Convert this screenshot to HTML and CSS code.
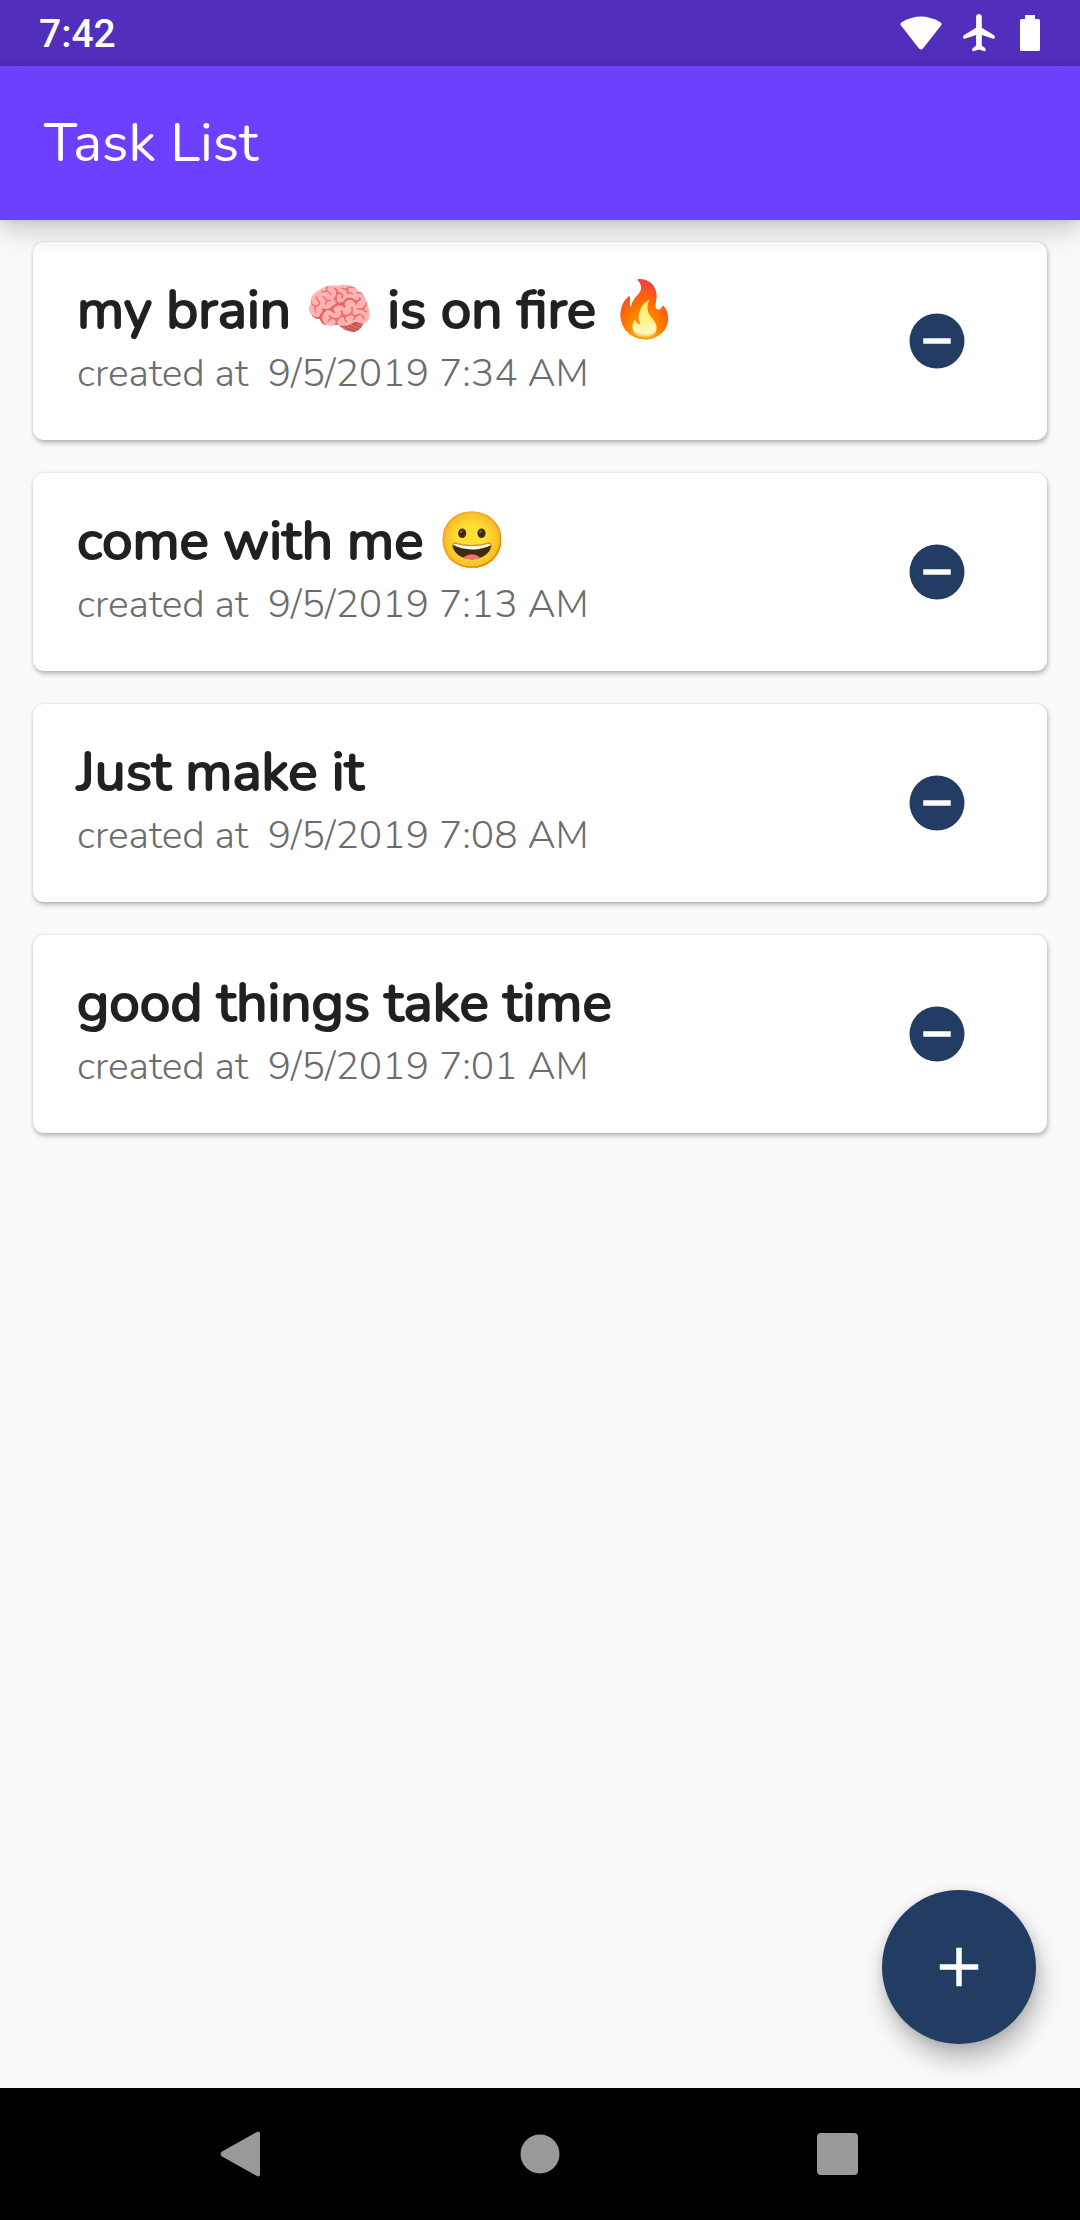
FILE: index.html
```
<!DOCTYPE html>
<html lang="en">
<head>
<meta charset="utf-8">
<meta name="viewport" content="width=device-width, initial-scale=1">
<title>Task List</title>
<link rel="stylesheet" href="styles.css">
</head>
<body>
<div class="screen">
  <div class="status-bar">
    <span class="clock">7:42</span>
    <div class="status-icons">
      <svg class="wifi" viewBox="0 0 42 34" aria-label="Wi-Fi"><path d="M2 6Q21-5 40 6Q42.500 7.500 41 9.500L23 32.500Q21 34.500 19 32.500L1 9.500Q-.5 7.500 2 6Z"/></svg>
      <svg class="plane" viewBox="2.500 2 18 20" aria-label="Airplane mode"><path d="M20.400 14.300c0-.5-.25-.95-.65-1.200L13.500 9.200V3.500C13.500 2.700 12.800 2 12 2s-1.500.7-1.500 1.500v5.700l-6.250 3.900c-.4.250-.65.7-.65 1.200 0 .47.450.8.900.67l6-1.870v5.600l-1.700 1.200c-.2.150-.3.350-.3.600v.6c0 .33.300.55.600.45L12 20.700l2.900.85c.3.100.6-.12.6-.45v-.6c0-.25-.1-.45-.3-.6l-1.700-1.200v-5.600l6 1.870c.45.130.9-.2.9-.67z"/></svg>
      <svg class="battery" viewBox="0 0 20 36" aria-label="Battery full"><path d="M5 0h10v4h3.500q1.500 0 1.500 1.500v29q0 1.500-1.500 1.500h-17Q0 36 0 34.500v-29Q0 4 1.500 4H5z"/></svg>
    </div>
  </div>
  <header class="app-bar"><h1>Task List</h1></header>
  <main class="content">
    <ul class="tasks">
      <li class="task">
        <div class="task-text"><h2>my brain 🧠 is on fire 🔥</h2><p>created at&nbsp; 9/5/2019 7:34 AM</p></div>
        <button class="remove" aria-label="Remove task"><svg viewBox="0 0 24 24"><path d="M12 2a10 10 0 1 0 0 20 10 10 0 0 0 0-20zm5 11H7v-2h10z"/></svg></button>
      </li>
      <li class="task">
        <div class="task-text"><h2>come with me 😀</h2><p>created at&nbsp; 9/5/2019 7:13 AM</p></div>
        <button class="remove" aria-label="Remove task"><svg viewBox="0 0 24 24"><path d="M12 2a10 10 0 1 0 0 20 10 10 0 0 0 0-20zm5 11H7v-2h10z"/></svg></button>
      </li>
      <li class="task">
        <div class="task-text"><h2>Just make it</h2><p>created at&nbsp; 9/5/2019 7:08 AM</p></div>
        <button class="remove" aria-label="Remove task"><svg viewBox="0 0 24 24"><path d="M12 2a10 10 0 1 0 0 20 10 10 0 0 0 0-20zm5 11H7v-2h10z"/></svg></button>
      </li>
      <li class="task">
        <div class="task-text"><h2>good things take time</h2><p>created at&nbsp; 9/5/2019 7:01 AM</p></div>
        <button class="remove" aria-label="Remove task"><svg viewBox="0 0 24 24"><path d="M12 2a10 10 0 1 0 0 20 10 10 0 0 0 0-20zm5 11H7v-2h10z"/></svg></button>
      </li>
    </ul>
    <button class="fab" aria-label="Add task"><svg viewBox="0 0 24 24"><path d="M19 13h-6v6h-2v-6H5v-2h6V5h2v6h6z"/></svg></button>
  </main>
  <nav class="nav-bar" aria-label="System navigation">
    <button aria-label="Back"><svg viewBox="0 0 46 46"><path d="M37 1.500Q41-1 41 3v40q0 4-4 1.500L3 25.500Q0 23 3 20.500Z"/></svg></button>
    <button aria-label="Home"><svg viewBox="0 0 46 46"><circle cx="23" cy="23" r="19.500"/></svg></button>
    <button aria-label="Overview"><svg viewBox="0 0 46 46"><rect x="2" y="2" width="41" height="42" rx="4"/></svg></button>
  </nav>
</div>
</body>
</html>
```
FILE: styles.css
```
* {
  box-sizing: border-box;
}

body {
  margin: 0;
  background: #fafafa;
  color: #212121;
  font-family: Nunito, Lato, "Noto Sans", sans-serif;
}

h1,
h2,
p,
ul {
  margin: 0;
  padding: 0;
}

button {
  border: 0;
  padding: 0;
  background: none;
  color: inherit;
  cursor: pointer;
}

svg {
  display: block;
  fill: currentColor;
}

.screen {
  display: flex;
  flex-direction: column;
  min-height: 100vh;
}

.status-bar {
  display: flex;
  align-items: center;
  justify-content: space-between;
  height: 66px;
  padding: 0 40px 0 39px;
  background: #522ebd;
  color: #fff;
}

.clock {
  padding-top: 2px;
  font-family: Roboto, sans-serif;
  font-size: 39px;
  font-weight: 500;
}

.status-icons {
  display: flex;
  align-items: center;
}

.wifi {
  width: 42px;
  height: 34px;
  margin-right: 18px;
}

.plane {
  width: 36px;
  height: 38px;
  margin-right: 24px;
}

.battery {
  width: 20px;
  height: 36px;
}

.app-bar {
  position: relative;
  z-index: 1;
  display: flex;
  align-items: center;
  height: 154px;
  padding: 0 44px 2px;
  background: #6d3fff;
  color: #fff;
  box-shadow: 0 10px 26px rgba(0, 0, 0, 0.2), 0 1px 8px rgba(0, 0, 0, 0.08);
}

h1 {
  font-size: 55px;
  font-weight: 400;
}

.content {
  position: relative;
  flex: 1;
  padding: 22px 33px;
}

.tasks {
  display: grid;
  gap: 33px;
  list-style: none;
}

.task {
  display: flex;
  align-items: center;
  justify-content: space-between;
  height: 198px;
  padding: 0 77px 0 44px;
  border-radius: 11px;
  background: #fff;
  box-shadow: 1px 3px 5px rgba(0, 0, 0, 0.25), 0 0 3px rgba(0, 0, 0, 0.12);
}

.task h2 {
  margin-bottom: 2px;
  font-size: 55px;
  font-weight: 400;
  line-height: 64px;
  -webkit-text-stroke: 2px currentColor;
}

.task p {
  color: #6c6c6c;
  font-size: 39px;
  font-weight: 350;
  line-height: 60px;
}

.task .remove {
  color: #233c63;
}

.remove svg {
  width: 66px;
  height: 66px;
}

.fab {
  position: absolute;
  right: 44px;
  bottom: 44px;
  display: grid;
  place-items: center;
  width: 154px;
  height: 154px;
  border-radius: 50%;
  background: #233c63;
  color: #fff;
  box-shadow: 4px 16px 26px rgba(0, 0, 0, 0.26), 0 2px 12px rgba(0, 0, 0, 0.12);
}

.fab svg {
  width: 66px;
  height: 66px;
}

.nav-bar {
  position: relative;
  display: flex;
  justify-content: center;
  height: 132px;
  background: #000;
  color: #999;
}

.nav-bar button {
  display: grid;
  place-items: center;
  width: 298px;
}

.nav-bar svg {
  width: 46px;
  height: 46px;
}
```
